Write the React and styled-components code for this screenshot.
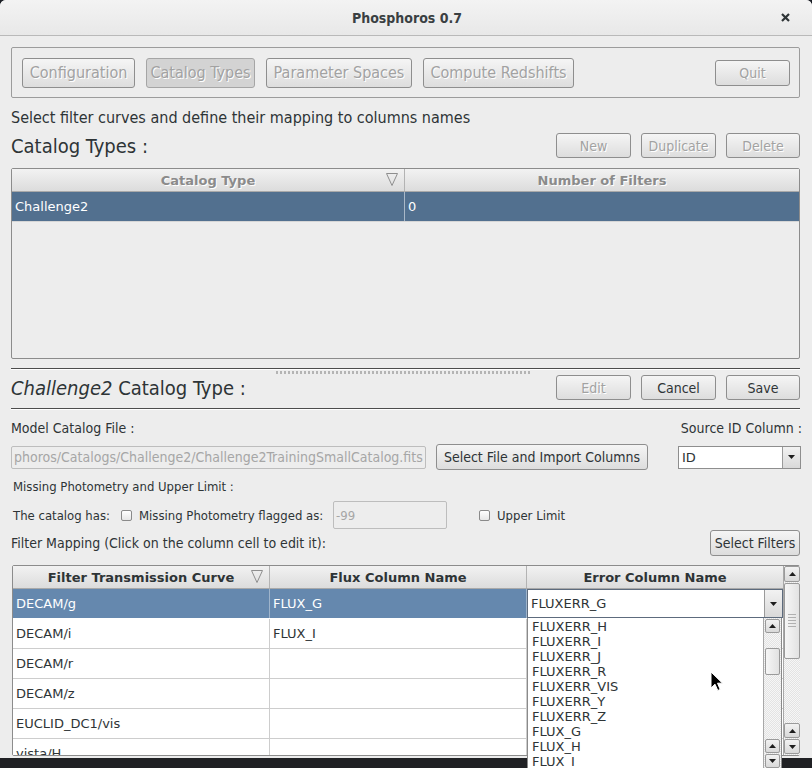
import React from 'react';
import styled, { createGlobalStyle } from 'styled-components';

const LABEL_FONT = `"DejaVu Sans Condensed", "DejaVu Sans", sans-serif`;
const CELL_FONT = `"DejaVu Sans", "Liberation Sans", sans-serif`;

const GlobalStyle = createGlobalStyle`
    html, body {
        margin: 0;
        padding: 0;
        background: #1c1f26;
    }
    * { box-sizing: border-box; }
`;

const Window = styled.div`
    position: relative;
    width: 812px;
    height: 768px;
    overflow: hidden;
    background: #ededed;
    border-radius: 6px 6px 0 0;
    display: flex;
    flex-direction: column;
    font-family: ${LABEL_FONT};
    font-stretch: condensed;
    color: #2e3436;
`;

const TitleBar = styled.div`
    height: 36px;
    flex: none;
    display: grid;
    grid-template-columns: 1fr auto 1fr;
    align-items: center;
    background: linear-gradient(#f3f3f3, #e8e8e8);
    border-bottom: 1px solid #b9b9b9;
`;

const Title = styled.div`
    grid-column: 2;
    font-size: 14px;
    font-weight: bold;
    color: #3a3f42;
    margin-left: 2px;
`;

const CloseBox = styled.div`
    justify-self: end;
    margin-right: 22px;
    display: flex;
`;

const Content = styled.div`
    flex: 1;
    display: flex;
    flex-direction: column;
    padding: 0 12px 0 11px;
`;

const BottomStrip = styled.div`
    height: 10px;
    flex: none;
    background: #202124;
`;

const NavPanel = styled.div`
    margin-top: 11px;
    height: 51px;
    border: 1px solid #9c9c9c;
    border-radius: 2px;
    display: flex;
    align-items: center;
    gap: 11px;
    padding: 0 9px 0 10px;
`;

const Button = styled.button`
    flex: none;
    width: ${p => p.$w}px;
    height: ${p => p.$h || 25}px;
    padding: 0;
    border: 1px solid ${p => (p.$pressed ? '#a5a5a5' : '#8e8e8e')};
    border-radius: 3px;
    background: ${p => (p.$pressed ? '#d3d3d3' : 'linear-gradient(#f5f5f5, #dddddd)')};
    color: ${p => (p.$off ? '#a2a2a2' : '#2e3436')};
    text-shadow: ${p => (p.$off ? '1px 1px 0 #ffffff' : 'none')};
    font-family: ${LABEL_FONT};
    font-stretch: condensed;
    font-size: ${p => p.$fs || 14}px;
    margin-left: ${p => (p.$push ? 'auto' : `${p.$ml || 0}px`)};
    white-space: nowrap;
`;

const Intro = styled.div`
    margin-top: 10px;
    height: 20px;
    line-height: 20px;
    font-size: 16px;
`;

const HeadRow = styled.div`
    margin-top: ${p => p.$mt}px;
    height: 25px;
    display: flex;
    align-items: center;
    justify-content: space-between;
`;

const Heading = styled.div`
    font-size: 20px;
    & em { font-style: italic; }
`;

const ButtonGroup = styled.div`
    display: flex;
    gap: 10px;
`;

const TypesTable = styled.div`
    margin-top: 10px;
    height: 191px;
    flex: none;
    border: 1px solid #8c8c8c;
    border-radius: 2px;
    background: #ededed;
    font-family: ${CELL_FONT};
    font-stretch: normal;
`;

const HeaderRow = styled.div`
    height: 23px;
    flex: none;
    display: grid;
    grid-template-columns: ${p => p.$cols};
    background: linear-gradient(#f2f2f2, #dcdcdc);
    border-bottom: 1px solid #a9a9a9;
`;

const HeaderCell = styled.div`
    position: relative;
    display: flex;
    align-items: center;
    justify-content: center;
    font-size: 13px;
    font-weight: bold;
    color: ${p => (p.$dim ? '#8b8b8b' : '#2e3436')};
    text-shadow: ${p => (p.$dim ? '1px 1px 0 #ffffff' : 'none')};
    border-right: 1px solid #b3b3b3;
    &:last-child { border-right: none; }
`;

const SortMark = styled.svg`
    position: absolute;
    right: 6px;
    top: 4px;
`;

const Row = styled.div`
    height: 30px;
    flex: none;
    display: grid;
    grid-template-columns: ${p => p.$cols};
    background: ${p => p.$bg || '#ffffff'};
    color: ${p => (p.$sel ? '#ffffff' : '#2e3436')};
    border-bottom: 1px solid ${p => p.$line || '#cdcdcd'};
    font-size: 13px;
`;

const Cell = styled.div`
    display: flex;
    align-items: center;
    padding-left: 3px;
    border-right: 1px solid ${p => p.$line || '#cdcdcd'};
    white-space: nowrap;
    overflow: hidden;
    &:last-child { border-right: none; }
`;

const Separator = styled.div`
    margin-top: ${p => p.$mt}px;
    height: 2px;
    flex: none;
    border-top: 1px solid #4d4d4d;
    border-bottom: 1px solid #ffffff;
`;

const SplitGrip = styled.div`
    align-self: center;
    width: 256px;
    height: 3px;
    margin: 1px 3px 1px 0;
    background: repeating-linear-gradient(90deg, #b4b4b4 0 2px, transparent 2px 4px);
`;

const LabelRow = styled.div`
    margin-top: ${p => p.$mt}px;
    height: 20px;
    display: flex;
    align-items: center;
    justify-content: space-between;
    font-size: 14px;
    & > span:last-child { margin-right: -2px; }
`;

const FieldRow = styled.div`
    margin-top: 6px;
    height: 26px;
    display: flex;
    align-items: center;
`;

const TextField = styled.div`
    width: ${p => p.$w}px;
    height: ${p => p.$h || 23}px;
    flex: none;
    display: flex;
    align-items: center;
    padding-left: 2px;
    border: 1px solid ${p => (p.$off ? '#bdbdbd' : '#8e8e8e')};
    border-radius: 2px;
    background: ${p => (p.$off ? '#ededed' : '#ffffff')};
    color: ${p => (p.$off ? '#a6a6a6' : '#2e3436')};
    font-size: ${p => p.$fs || 14}px;
    white-space: nowrap;
    overflow: hidden;
`;

const Combo = styled.div`
    margin-left: auto;
    margin-right: -1px;
    width: 123px;
    height: 23px;
    display: flex;
    border: 1px solid #8e8e8e;
    background: #ffffff;
    font-family: ${CELL_FONT};
    font-stretch: normal;
    font-size: 13px;
`;

const ComboText = styled.div`
    flex: 1;
    display: flex;
    align-items: center;
    padding-left: 3px;
`;

const ArrowBox = styled.div`
    width: ${p => p.$w || 18}px;
    height: ${p => (p.$h ? `${p.$h}px` : 'auto')};
    flex: none;
    display: flex;
    align-items: center;
    justify-content: center;
    background: linear-gradient(#f2f2f2, #d9d9d9);
    border-left: 1px solid #9a9a9a;
    border: ${p => (p.$boxed ? '1px solid #9a9a9a' : undefined)};
    border-radius: ${p => (p.$boxed ? '2px' : '0')};
`;

const SmallLabel = styled.div`
    margin-top: 8px;
    height: 18px;
    line-height: 18px;
    font-size: 13px;
    padding-left: 2px;
`;

const FlagRow = styled.div`
    margin-top: 5px;
    height: 28px;
    display: flex;
    align-items: center;
    padding-left: 2px;
    font-size: 13px;
`;

const FlagText = styled.span`
    width: ${p => (p.$w ? `${p.$w}px` : 'auto')};
    flex: none;
    white-space: nowrap;
`;

const Check = styled.span`
    width: 11px;
    height: 11px;
    flex: none;
    margin: 0 7px 0 ${p => p.$ml || 0}px;
    border: 1px solid #8a8a8a;
    border-radius: 2px;
    background: linear-gradient(#ffffff, #e6e6e6);
`;

const MappingRow = styled.div`
    margin-top: 1px;
    height: 26px;
    display: flex;
    align-items: center;
    justify-content: space-between;
    font-size: 14px;
`;

const MapTable = styled.div`
    margin: 9px 0 0 1px;
    height: 191px;
    flex: none;
    display: flex;
    border: 1px solid #8c8c8c;
    border-radius: 2px;
    font-family: ${CELL_FONT};
    font-stretch: normal;
    background: #ededed;
`;

const MapGrid = styled.div`
    width: 770px;
    flex: none;
    display: flex;
    flex-direction: column;
    overflow: visible;
`;

const MapBody = styled.div`
    position: relative;
    flex: 1;
    min-height: 0;
`;

const RowClip = styled.div`
    height: 100%;
    overflow: hidden;
`;

const EditCell = styled.div`
    display: flex;
    border: 1px solid #5d6b7d;
    background: #ffffff;
    color: #2e3436;
`;

const Popup = styled.div`
    position: absolute;
    left: 514px;
    top: 29px;
    width: 255px;
    height: 150px;
    display: flex;
    background: #ffffff;
    border: 1px solid #8a8a8a;
    border-top: none;
    border-bottom: none;
    z-index: 2;
`;

const PopupList = styled.div`
    flex: 1;
    padding: 1px 0 0 4px;
    font-size: 13px;
    line-height: 15px;
    color: #2e3436;
`;

const ScrollBar = styled.div`
    width: ${p => p.$w}px;
    flex: none;
    display: flex;
    flex-direction: column;
    gap: 1px;
    padding: ${p => p.$pad || '0'};
    border-left: 1px solid #a8a8a8;
    background: repeating-conic-gradient(#e3e3e3 0 25%, #f6f6f6 0 50%) 0 0 / 2px 2px;
`;

const Thumb = styled.div`
    height: ${p => p.$h}px;
    margin-top: ${p => p.$mt || 0}px;
    flex: none;
    display: flex;
    align-items: center;
    justify-content: center;
    border: 1px solid #9a9a9a;
    border-radius: 2px;
    background: linear-gradient(90deg, #f6f6f6, #e2e2e2);
`;

const Grip = styled.div`
    width: 8px;
    height: 16px;
    background: radial-gradient(circle, #b0b0b0 0.8px, transparent 1px) 0 0 / 2px 3px;
`;

const Spacer = styled.div`
    flex: 1;
`;

const CursorSvg = styled.svg`
    position: absolute;
    left: 710px;
    top: 671px;
    z-index: 5;
`;

const Tri = ({ up }) => (
    <svg width="7" height="4" viewBox="0 0 7 4">
        <path d={up ? 'M0 4 L3.5 0 L7 4 Z' : 'M0 0 L7 0 L3.5 4 Z'} fill="#1e1e1e" />
    </svg>
);

const Sort = () => (
    <SortMark width="12" height="13" viewBox="0 0 12 13">
        <path d="M0.5 0.5 L11.5 0.5 L6 12.5 Z" fill="none" stroke="#8e8e8e" strokeWidth="1" />
    </SortMark>
);

const CloseIcon = () => (
    <svg width="9" height="9" viewBox="0 0 9 9">
        <path d="M1 1 L8 8 M8 1 L1 8" stroke="#2e3436" strokeWidth="2.2" />
    </svg>
);

const typeCols = '393px 1fr';
const mapCols = '257px 257px 1fr';

const mappings = [
    ['DECAM/g', 'FLUX_G'],
    ['DECAM/i', 'FLUX_I'],
    ['DECAM/r', ''],
    ['DECAM/z', ''],
    ['EUCLID_DC1/vis', ''],
    ['vista/H', ''],
];

const errorColumns = [
    'FLUXERR_H', 'FLUXERR_I', 'FLUXERR_J', 'FLUXERR_R', 'FLUXERR_VIS',
    'FLUXERR_Y', 'FLUXERR_Z', 'FLUX_G', 'FLUX_H', 'FLUX_I',
];

const App = () => {
    return (
        <Window>
            <GlobalStyle />
            <TitleBar>
                <Title>Phosphoros 0.7</Title>
                <CloseBox><CloseIcon /></CloseBox>
            </TitleBar>

            <Content>
                <NavPanel>
                    <Button $w={113} $h={30} $fs={16} $off>Configuration</Button>
                    <Button $w={109} $h={30} $fs={16} $off $pressed>Catalog Types</Button>
                    <Button $w={146} $h={30} $fs={16} $off>Parameter Spaces</Button>
                    <Button $w={151} $h={30} $fs={16} $off>Compute Redshifts</Button>
                    <Button $w={75} $h={26} $off $push>Quit</Button>
                </NavPanel>

                <Intro>Select filter curves and define their mapping to columns names</Intro>

                <HeadRow $mt={5}>
                    <Heading>Catalog Types :</Heading>
                    <ButtonGroup>
                        <Button $w={75} $off>New</Button>
                        <Button $w={75} $off>Duplicate</Button>
                        <Button $w={74} $off>Delete</Button>
                    </ButtonGroup>
                </HeadRow>

                <TypesTable>
                    <HeaderRow $cols={typeCols}>
                        <HeaderCell $dim>Catalog Type<Sort /></HeaderCell>
                        <HeaderCell $dim>Number of Filters</HeaderCell>
                    </HeaderRow>
                    <Row $cols={typeCols} $bg="#52708f" $sel $line="#d6d6d6">
                        <Cell $line="#a9b8c8">Challenge2</Cell>
                        <Cell>0</Cell>
                    </Row>
                </TypesTable>

                <Separator $mt={9} />
                <SplitGrip />

                <HeadRow $mt={0}>
                    <Heading><em>Challenge2</em> Catalog Type :</Heading>
                    <ButtonGroup>
                        <Button $w={75} $off>Edit</Button>
                        <Button $w={75}>Cancel</Button>
                        <Button $w={74}>Save</Button>
                    </ButtonGroup>
                </HeadRow>

                <Separator $mt={8} />

                <LabelRow $mt={8}>
                    <span>Model Catalog File :</span>
                    <span>Source ID Column :</span>
                </LabelRow>

                <FieldRow>
                    <TextField $w={415} $off>phoros/Catalogs/Challenge2/Challenge2TrainingSmallCatalog.fits</TextField>
                    <Button $w={212} $h={26} $ml={10}>Select File and Import Columns</Button>
                    <Combo>
                        <ComboText>ID</ComboText>
                        <ArrowBox><Tri /></ArrowBox>
                    </Combo>
                </FieldRow>

                <SmallLabel>Missing Photometry and Upper Limit :</SmallLabel>

                <FlagRow>
                    <FlagText $w={108}>The catalog has:</FlagText>
                    <Check />
                    <FlagText $w={194}>Missing Photometry flagged as:</FlagText>
                    <TextField $w={114} $h={28} $off $fs={13}>-99</TextField>
                    <Check $ml={32} />
                    <FlagText>Upper Limit</FlagText>
                </FlagRow>

                <MappingRow>
                    <span>Filter Mapping (Click on the column cell to edit it):</span>
                    <Button $w={90} $h={26}>Select Filters</Button>
                </MappingRow>

                <MapTable>
                    <MapGrid>
                        <HeaderRow $cols={mapCols}>
                            <HeaderCell>Filter Transmission Curve<Sort /></HeaderCell>
                            <HeaderCell>Flux Column Name</HeaderCell>
                            <HeaderCell>Error Column Name</HeaderCell>
                        </HeaderRow>
                        <MapBody>
                            <RowClip>
                                {mappings.map(([curve, flux], i) => (
                                    <Row
                                        key={curve}
                                        $cols={mapCols}
                                        $bg={i === 0 ? '#6588ae' : '#ffffff'}
                                        $sel={i === 0}
                                        $line={i === 0 ? '#ffffff' : '#cdcdcd'}
                                    >
                                        <Cell $line={i === 0 ? '#9fb4cb' : '#cdcdcd'}>{curve}</Cell>
                                        <Cell $line={i === 0 ? '#9fb4cb' : '#cdcdcd'}>{flux}</Cell>
                                        {i === 0 ? (
                                            <EditCell>
                                                <ComboText>FLUXERR_G</ComboText>
                                                <ArrowBox><Tri /></ArrowBox>
                                            </EditCell>
                                        ) : (
                                            <Cell />
                                        )}
                                    </Row>
                                ))}
                            </RowClip>
                            <Popup>
                                <PopupList>
                                    {errorColumns.map(c => <div key={c}>{c}</div>)}
                                </PopupList>
                                <ScrollBar $w={18} $pad="1px 1px 0 1px">
                                    <ArrowBox $w={15} $h={14} $boxed><Tri up /></ArrowBox>
                                    <Thumb $h={27} $mt={14} />
                                    <Spacer />
                                    <ArrowBox $w={15} $h={14} $boxed><Tri up /></ArrowBox>
                                    <ArrowBox $w={15} $h={14} $boxed><Tri /></ArrowBox>
                                </ScrollBar>
                            </Popup>
                        </MapBody>
                    </MapGrid>
                    <ScrollBar $w={17} $pad="0 0 1px 0">
                        <ArrowBox $w={16} $h={16} $boxed><Tri up /></ArrowBox>
                        <Thumb $h={76}><Grip /></Thumb>
                        <Spacer />
                        <ArrowBox $w={16} $h={15} $boxed><Tri up /></ArrowBox>
                        <ArrowBox $w={16} $h={15} $boxed><Tri /></ArrowBox>
                    </ScrollBar>
                </MapTable>
            </Content>

            <BottomStrip />

            <CursorSvg width="14" height="22" viewBox="0 0 14 22">
                <path d="M1 1 L1 17 L5 13.2 L7.8 19.5 L10.2 18.4 L7.5 12.2 L12.5 12.2 Z" fill="#000000" stroke="#ffffff" strokeWidth="1" />
            </CursorSvg>
        </Window>
    );
};

export default App;
